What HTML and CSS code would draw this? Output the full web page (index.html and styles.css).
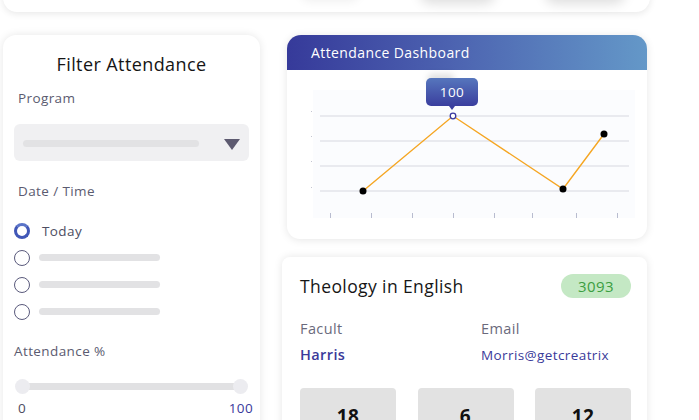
FILE: index.html
```html
<!DOCTYPE html>
<html>
<head>
<meta charset="utf-8">
<link rel="stylesheet" href="styles.css">
</head>
<body>
<div class="page">
  <div class="top-card">
    <span class="ghost g1"></span>
    <span class="ghost g2"></span>
    <span class="ghost g3"></span>
  </div>
  <div class="main">
    <aside class="filter-card">
      <h2 class="filter-title">Filter Attendance</h2>
      <div class="label label-program">Program</div>
      <div class="select">
        <span class="bar bar-select"></span>
        <span class="caret"></span>
      </div>
      <div class="label label-date">Date / Time</div>
      <ul class="radios">
        <li class="radio-row"><span class="radio checked"></span><span class="radio-text">Today</span></li>
        <li class="radio-row"><span class="radio"></span><span class="bar bar-radio"></span></li>
        <li class="radio-row"><span class="radio"></span><span class="bar bar-radio"></span></li>
        <li class="radio-row"><span class="radio"></span><span class="bar bar-radio"></span></li>
      </ul>
      <div class="label label-att">Attendance %</div>
      <div class="slider">
        <span class="thumb"></span>
        <span class="thumb"></span>
      </div>
      <div class="slider-labels">
        <span class="min">0</span>
        <span class="max">100</span>
      </div>
    </aside>
    <section class="right-col">
      <div class="chart-card">
        <div class="chart-head">Attendance Dashboard</div>
        <div class="chart-body">
          <svg class="chart" width="360" height="169" viewBox="0 0 360 169">
            <rect x="26" y="20" width="322" height="128" fill="#fbfcfe"/>
            <g stroke="#e3e4ea" stroke-width="1.5">
              <line x1="33" y1="46" x2="342" y2="46"/>
              <line x1="33" y1="71" x2="342" y2="71"/>
              <line x1="33" y1="96" x2="342" y2="96"/>
              <line x1="33" y1="121" x2="342" y2="121"/>
            </g>
            <g fill="#c4c6d2">
              <rect x="24" y="41" width="1" height="1"/>
              <rect x="24" y="66" width="1" height="1"/>
              <rect x="24" y="91" width="1" height="1"/>
              <rect x="24" y="117" width="1" height="1"/>
            </g>
            <g stroke="#b8bccf" stroke-width="1">
              <line x1="43.5" y1="143" x2="43.5" y2="148"/>
              <line x1="84.5" y1="143" x2="84.5" y2="148"/>
              <line x1="125.5" y1="143" x2="125.5" y2="148"/>
              <line x1="166.5" y1="143" x2="166.5" y2="148"/>
              <line x1="207.5" y1="143" x2="207.5" y2="148"/>
              <line x1="245.5" y1="143" x2="245.5" y2="148"/>
              <line x1="289.5" y1="143" x2="289.5" y2="148"/>
              <line x1="330.5" y1="143" x2="330.5" y2="148"/>
            </g>
            <polyline points="76,121 166,46 276,119 317,64" fill="none" stroke="#f5a623" stroke-width="1.4"/>
            <circle cx="76" cy="121" r="3.5" fill="#000"/>
            <circle cx="276" cy="119" r="3.5" fill="#000"/>
            <circle cx="317" cy="64" r="3.5" fill="#000"/>
            <circle cx="166" cy="46" r="2.8" fill="#fff" stroke="#3a3aa0" stroke-width="1.3"/>
          </svg>
          <div class="tip-shadow"></div>
          <div class="tooltip">100</div>
        </div>
      </div>
      <div class="course-card">
        <div class="course-head">
          <h3 class="course-title">Theology in English</h3>
          <span class="badge">3093</span>
        </div>
        <div class="info">
          <div class="info-col">
            <div class="info-label">Facult</div>
            <div class="info-value strong">Harris</div>
          </div>
          <div class="info-col">
            <div class="info-label">Email</div>
            <div class="info-value">Morris@getcreatrix</div>
          </div>
        </div>
        <div class="stats">
          <div class="stat">18</div>
          <div class="stat">6</div>
          <div class="stat">12</div>
        </div>
      </div>
    </section>
  </div>
</div>
</body>
</html>
```
FILE: styles.css
```css
* { box-sizing: border-box; }
html, body {
  margin: 0;
  padding: 0;
  background: #ffffff;
  overflow: hidden;
  height: 420px;
}
body {
  font-family: "Open Sans", "DejaVu Sans", sans-serif;
  color: #1c1c1c;
  letter-spacing: 0.4px;
}
.page {
  width: 650px;
  padding-left: 3px;
}
.top-card {
  height: 60px;
  margin-top: -48px;
  background: #fff;
  border-radius: 0 0 14px 14px;
  box-shadow: 0 2px 7px rgba(0,0,0,0.09);
  display: flex;
  justify-content: flex-end;
  align-items: flex-end;
  padding: 0 25px 14px 0;
  gap: 50px;
}
.ghost {
  display: block;
  height: 30px;
  background: #fff;
  border-radius: 10px;
  box-shadow: 0 6px 12px rgba(0,0,0,0.13);
}
.g1 { width: 60px; margin-right: 10px; box-shadow: 0 4px 10px rgba(0,0,0,0.06); }
.g2 { width: 75px; }
.g3 { width: 80px; }

.main {
  display: grid;
  grid-template-columns: 257px 1fr;
  column-gap: 22px;
  margin-top: 23px;
}

/* Filter card */
.filter-card {
  background: #fff;
  border-radius: 13px;
  box-shadow: 0 0 8px rgba(0,0,0,0.1);
  height: 420px;
  padding-top: 17px;
}
.filter-title {
  margin: 0;
  text-align: center;
  font-size: 18px;
  font-weight: 400;
  line-height: 24px;
  color: #151515;
}
.label {
  font-size: 13.5px;
  line-height: 18px;
  color: #5b5b70;
}
.label-program { margin: 13px 0 0 15px; }
.select {
  margin: 17px 0 0 11px;
  width: 235px;
  height: 37px;
  background: #f0f0f2;
  border-radius: 6px;
  display: flex;
  align-items: center;
  padding: 0 9px;
  justify-content: space-between;
}
.bar {
  display: block;
  height: 7px;
  background: #e2e2e4;
  border-radius: 4px;
}
.bar-select { width: 176px; margin-top: 1px; }
.caret {
  width: 0; height: 0;
  border-left: 8px solid transparent;
  border-right: 8px solid transparent;
  border-top: 11px solid #5d5a70;
  margin-top: 3px;
}
.label-date { margin: 21px 0 0 15px; }
.radios {
  list-style: none;
  margin: 17px 0 0 0;
  padding: 0 0 0 11px;
}
.radio-row {
  height: 27px;
  display: flex;
  align-items: center;
}
.radio {
  width: 16px;
  height: 16px;
  border-radius: 50%;
  border: 1.5px solid #5a5a7c;
  flex: none;
}
.radio.checked {
  border: 3.5px solid #4157b7;
  border-top-color: #5a74c8;
}
.radio-text {
  font-size: 13.5px;
  color: #4d4d62;
  margin-left: 12px;
}
.bar-radio { width: 121px; margin-left: 9px; }
.label-att { margin: 17px 0 0 11px; }
.slider {
  margin: 19px 0 0 12px;
  width: 233px;
  height: 15px;
  position: relative;
  display: flex;
  justify-content: space-between;
  align-items: center;
  background: linear-gradient(#e1e1e3, #e1e1e3) center / calc(100% - 10px) 7px no-repeat;
}
.thumb {
  width: 15px;
  height: 15px;
  border-radius: 50%;
  background: #ececf0;
}
.slider-labels {
  margin: 5px 0 0 15px;
  width: 235px;
  display: flex;
  justify-content: space-between;
  font-size: 13.5px;
  line-height: 18px;
}
.min { color: #4d4d62; }
.max { color: #3a3a9c; }

/* Right column */
.right-col { display: flex; flex-direction: column; }
.chart-card {
  margin: 0 0 0 5px;
  width: 360px;
  background: #fff;
  border-radius: 14px 14px 13px 13px;
  box-shadow: 0 1px 8px rgba(0,0,0,0.1);
  overflow: hidden;
}
.chart-head {
  height: 35px;
  background: linear-gradient(90deg, #363a9a 0%, #4c62b0 45%, #6498c8 100%);
  color: #fff;
  font-size: 14px;
  line-height: 35px;
  padding-left: 24px;
}
.chart-body {
  position: relative;
  height: 169px;
}
.chart { display: block; }
.tooltip {
  position: absolute;
  left: 139px;
  top: 8px;
  width: 52px;
  height: 28px;
  border-radius: 5px;
  background: linear-gradient(#5676bd, #3a3e9e);
  color: #fff;
  font-size: 13.5px;
  line-height: 28px;
  text-align: center;
}
.tooltip::after {
  content: "";
  position: absolute;
  left: 23px;
  bottom: -4px;
  border-left: 3px solid transparent;
  border-right: 3px solid transparent;
  border-top: 4px solid #3a3e9e;
}
.tip-shadow {
  position: absolute;
  left: 141px;
  top: 4px;
  width: 26px;
  height: 10px;
  background: rgba(0,0,0,0.12);
  filter: blur(3px);
  border-radius: 4px;
}

.course-card {
  margin-top: 18px;
  width: 365px;
  height: 200px;
  background: #fff;
  border-radius: 8px;
  box-shadow: 0 0 8px rgba(0,0,0,0.1);
  padding: 17px 16px 0 18px;
}
.course-head {
  display: flex;
  justify-content: space-between;
  align-items: center;
}
.course-title {
  margin: 0;
  font-size: 17.5px;
  font-weight: 400;
  line-height: 24px;
  color: #161616;
}
.badge {
  width: 70px;
  height: 24px;
  border-radius: 12px;
  background: #c4e8c4;
  color: #3b9e41;
  font-size: 15px;
  line-height: 24px;
  text-align: center;
}
.info {
  display: grid;
  grid-template-columns: 181px 1fr;
  margin-top: 22px;
}
.info-label {
  font-size: 14.5px;
  line-height: 18px;
  color: #6a6a7c;
}
.info-value {
  margin-top: 8px;
  font-size: 13.5px;
  line-height: 18px;
  color: #3a3a9a;
}
.info-value.strong { font-weight: 600; font-size: 14.5px; }
.stats {
  display: grid;
  grid-template-columns: repeat(3, 96px);
  justify-content: space-between;
  margin-top: 24px;
}
.stat {
  height: 60px;
  background: #e2e2e2;
  border-radius: 4px;
  text-align: center;
  font-size: 19px;
  font-weight: 700;
  padding-top: 15px;
  color: #111;
}
```
